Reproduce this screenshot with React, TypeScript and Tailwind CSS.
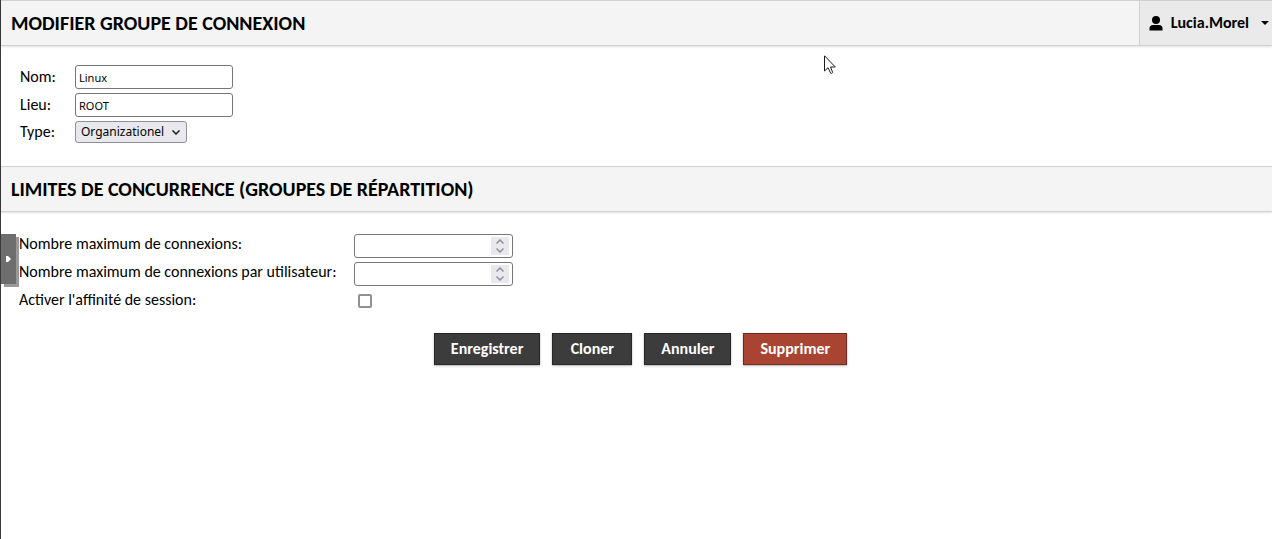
import { useState } from "react";
import type { ReactNode } from "react";

const fieldClass =
  "block h-6 w-[158px] rounded-[3px] border border-[#76767c] bg-white px-[3px] font-['Noto_Sans',sans-serif] text-[11px] text-black outline-none";

function SectionHeader({ title, children }: { title: string; children?: ReactNode }) {
  return (
    <header className="flex h-[46px] items-stretch justify-between border-y border-[#d0d0d0] bg-[#f4f4f4] shadow-[0_1px_2px_rgba(0,0,0,0.12)]">
      <h2 className="flex items-center pl-2.5 text-xl font-bold uppercase">{title}</h2>
      {children}
    </header>
  );
}

function UserMenu() {
  return (
    <button type="button" className="flex items-center border-l border-[#d0d0d0] bg-[#eaeaea] pr-[3px] pl-[9px] text-base font-bold">
      <svg viewBox="0 0 14 15" className="h-[15px] w-[14px]" aria-hidden="true">
        <circle cx="7" cy="4" r="4" />
        <path d="M0.500 14.500v-2q0-3.500 3.500-3.500h6q3.500 0 3.500 3.500v2Z" />
      </svg>
      <span className="pl-2">Lucia.Morel</span>
      <svg viewBox="0 0 8 4" className="ml-3 h-1 w-2" aria-hidden="true">
        <path d="M0 0h8L4 4Z" />
      </svg>
    </button>
  );
}

function NumberField({ id }: { id: string }) {
  const [value, setValue] = useState("");
  const step = (by: number) => setValue(String((Number(value) || 0) + by));
  return (
    <div className="flex h-6 w-[159px] items-center rounded-[3px] border border-[#76767c] bg-white pr-[3px]">
      <input
        id={id}
        type="number"
        value={value}
        onChange={(e) => setValue(e.target.value)}
        className="h-full min-w-0 flex-1 appearance-none bg-transparent px-[3px] font-['Noto_Sans',sans-serif] text-[11px] outline-none [appearance:textfield] [&::-webkit-inner-spin-button]:appearance-none"
      />
      <div className="flex h-[18px] w-[18px] flex-col bg-[#e9e9ed] text-[#8f8f9d]">
        <button type="button" aria-label="Augmenter" onClick={() => step(1)} className="flex flex-1 items-center justify-center">
          <svg viewBox="0 0 8 5" className="h-[5px] w-2" fill="none" stroke="currentColor" strokeWidth="1.5">
            <path d="M0.500 4.500 4 1l3.500 3.500" />
          </svg>
        </button>
        <button type="button" aria-label="Diminuer" onClick={() => step(-1)} className="flex flex-1 items-center justify-center">
          <svg viewBox="0 0 8 5" className="h-[5px] w-2" fill="none" stroke="currentColor" strokeWidth="1.5">
            <path d="M0.500 0.500 4 4 7.500 0.500" />
          </svg>
        </button>
      </div>
    </div>
  );
}

const buttonClass =
  "h-8 min-w-20 border border-[#262626] bg-[#3c3c3c] px-4 text-base font-bold text-white shadow-[0_1px_2px_rgba(0,0,0,0.3)]";

export default function App() {
  return (
    <div className="relative min-h-screen border-l border-[#3a3a3e] bg-white font-['Carlito','Lato',sans-serif] text-base leading-5 text-black">
      <SectionHeader title="Modifier groupe de connexion">
        <UserMenu />
      </SectionHeader>

      <form onSubmit={(e) => e.preventDefault()}>
        <div className="grid grid-cols-[55px_auto] items-center justify-start gap-y-1 pt-[19px] pb-[23px] pl-[19px]">
          <label htmlFor="name">Nom:</label>
          <input id="name" defaultValue="Linux" className={fieldClass} />
          <label htmlFor="location">Lieu:</label>
          <input id="location" defaultValue="ROOT" className={fieldClass} />
          <label htmlFor="type">Type:</label>
          <div className="relative w-28">
            <select
              id="type"
              className="block h-[22px] w-full appearance-none rounded-[3px] border border-[#8f8f9d] bg-[#e9e9ed] pl-[5px] font-['Noto_Sans',sans-serif] text-[12px] leading-5 text-black outline-none"
            >
              <option>Organizationel</option>
              <option>Répartition</option>
            </select>
            <svg viewBox="0 0 8 5" className="pointer-events-none absolute top-[9px] right-[7px] h-[5px] w-2" fill="none" stroke="#1c1c1c" strokeWidth="1.5" aria-hidden="true">
              <path d="M0.500 0.500 4 4 7.500 0.500" />
            </svg>
          </div>
        </div>

        <SectionHeader title="Limites de concurrence (groupes de répartition)" />

        <div className="grid grid-cols-[335px_auto] items-start justify-start gap-y-1 pt-[22px] pl-[18px]">
          <label htmlFor="max">Nombre maximum de connexions:</label>
          <NumberField id="max" />
          <label htmlFor="max-user">Nombre maximum de connexions par utilisateur:</label>
          <NumberField id="max-user" />
          <label htmlFor="affinity">Activer l'affinité de session:</label>
          <input
            id="affinity"
            type="checkbox"
            className="mt-1 ml-1 h-[14px] w-[14px] appearance-none rounded-[2px] border-2 border-[#8f8f9d] bg-white checked:bg-[#0060df]"
          />
        </div>

        <div className="flex justify-center gap-3 pt-[23px] pl-2">
          <button type="submit" className={buttonClass}>Enregistrer</button>
          <button type="button" className={buttonClass}>Cloner</button>
          <button type="button" className={buttonClass}>Annuler</button>
          <button type="button" className="h-8 border border-[#6f2b22] bg-[#a94433] px-4 text-base font-bold text-white shadow-[0_1px_2px_rgba(0,0,0,0.3)]">
            Supprimer
          </button>
        </div>
      </form>

      <button
        type="button"
        aria-label="Ouvrir le panneau"
        className="absolute top-[234px] left-0 flex h-[50px] w-[15px] items-center justify-center bg-[#6e6e6e] shadow-[3px_3px_0_#999999]"
      >
        <svg viewBox="0 0 5 6" className="h-[6px] w-[5px]" fill="white" aria-hidden="true">
          <path d="M0 0h2l3 3-3 3H0Z" />
        </svg>
      </button>

      <svg viewBox="0 0 12 20" className="pointer-events-none absolute top-[55px] left-[823px] h-5 w-3" fill="white" stroke="#1b1b2b" aria-hidden="true">
        <path d="M0.500 0.800v15.200l3.500-3.300 2.700 5.500q1 .8 2-.7L6.500 12h4.800Z" />
      </svg>
    </div>
  );
}
